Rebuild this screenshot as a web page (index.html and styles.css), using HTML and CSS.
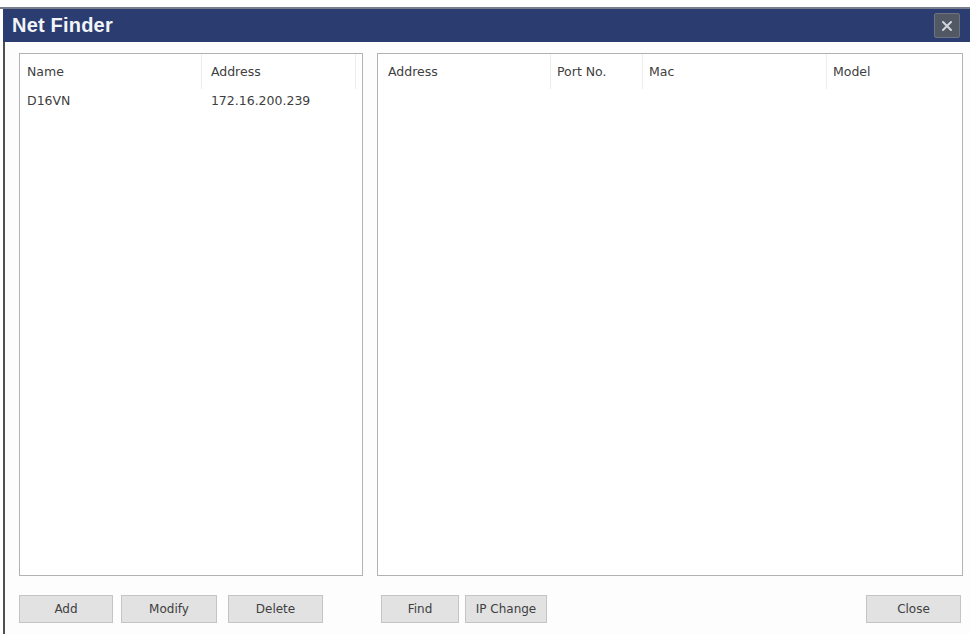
FILE: index.html
```html
<!DOCTYPE html>
<html lang="en">
  <head>
    <meta charset="UTF-8" />
    <meta name="viewport" content="width=device-width, initial-scale=1.0" />
    <title>Net Finder</title>
    <link rel="stylesheet" href="styles.css">
  </head>
  <body>
    <div class="backdrop"></div>
    <main class="window">
      <div class="titlebar">
        <h1 class="titlebar__title">Net Finder</h1>
        <div class="titlebar__close">
          <svg width="14" height="14" viewBox="0 0 14 14">
            <path d="M3 3 L11 11 M11 3 L3 11" stroke="#d3d6dc" stroke-width="2" stroke-linecap="round" />
          </svg>
        </div>
      </div>
      <div class="content">
        <div class="panels">
          <div class="list list_saved">
            <div class="list__head">
              <div class="cell cell_name">Name</div>
              <div class="cell cell_addr">Address</div>
              <div class="cell cell_rest"></div>
            </div>
            <div class="list__row">
              <div class="cell cell_name">D16VN</div>
              <div class="cell cell_addr">172.16.200.239</div>
              <div class="cell"></div>
            </div>
          </div>
          <div class="list list_found">
            <div class="list__head">
              <div class="cell cell_faddr">Address</div>
              <div class="cell cell_sm">Port No.</div>
              <div class="cell cell_sm">Mac</div>
              <div class="cell cell_sm cell_last">Model</div>
            </div>
          </div>
        </div>
        <div class="buttons">
          <div class="buttons__group">
            <button class="btn btn_add">Add</button>
            <button class="btn btn_modify">Modify</button>
            <button class="btn btn_delete">Delete</button>
          </div>
          <div class="buttons__group buttons__group_right">
            <button class="btn btn_find">Find</button>
            <button class="btn btn_ip">IP Change</button>
            <button class="btn btn_close">Close</button>
          </div>
        </div>
      </div>
    </main>
  </body>
</html>
```

FILE: styles.css
```css
:root {
  --navy: rgb(42, 60, 112);
  --border: rgb(178, 178, 178);
  --sep: rgb(236, 236, 236);
  --text: rgb(64, 64, 64);
  --btn-bg: rgb(226, 226, 226);
  --btn-border: rgb(196, 196, 196);
}

* {
  box-sizing: border-box;
  margin: 0;
  padding: 0;
}
body {
  font-family: "DejaVu Sans", Verdana, sans-serif;
  background-color: #fff;
  width: 970px;
  height: 634px;
  overflow: hidden;
}
.backdrop {
  height: 9px;
  background-color: #fff;
  border-bottom: 2px solid rgb(120, 126, 140);
}
.window {
  margin-left: 3px;
  height: 625px;
  border-left: 2px solid rgb(80, 80, 80);
  background-color: #fdfdfd;
}
.titlebar {
  height: 33px;
  margin-left: -2px;
  background-color: var(--navy);
  display: flex;
  align-items: center;
  justify-content: space-between;
  padding: 0 10px 0 9px;
}
.titlebar__title {
  color: #f2f4f8;
  font-family: "Liberation Sans", Arial, sans-serif;
  font-size: 20px;
  font-weight: 700;
  letter-spacing: 0.2px;
}
.titlebar__close {
  width: 26px;
  height: 25px;
  background-color: rgb(82, 88, 100);
  border: 1px solid rgb(108, 114, 126);
  border-radius: 2px;
  display: flex;
  align-items: center;
  justify-content: center;
}

.content {
  padding: 11px 0 0 14px;
}
.panels {
  display: flex;
  gap: 14px;
}
.list {
  height: 523px;
  border: 1px solid var(--border);
  background-color: #fff;
  color: var(--text);
  font-size: 12.5px;
}
.list_saved {
  width: 344px;
}
.list_found {
  width: 586px;
}
.list__head,
.list__row {
  display: flex;
}
.list__head {
  height: 35px;
}
.list__row {
  height: 22px;
}
.cell {
  display: flex;
  align-items: center;
  padding-left: 6px;
  white-space: nowrap;
}
.list__head .cell {
  border-right: 1px solid var(--sep);
}
.list__head .cell_last,
.list__head .cell_rest {
  border-right: none;
}
.list_saved .cell_name {
  width: 183px;
  padding-left: 7px;
}
.list_saved .cell_addr {
  width: 155px;
  padding-left: 9px;
}
.cell_faddr {
  width: 173px;
  padding-left: 10px;
}
.list_found .cell_sm:nth-child(2) {
  width: 92px;
}
.list_found .cell_sm:nth-child(3) {
  width: 184px;
}

.buttons {
  display: flex;
  gap: 14px;
  margin-top: 19px;
}
.buttons__group {
  width: 344px;
  display: flex;
}
.buttons__group_right {
  width: 586px;
  padding: 0 2px 0 4px;
}
.btn {
  height: 28px;
  background-color: var(--btn-bg);
  border: 1px solid var(--btn-border);
  color: var(--text);
  font-family: "DejaVu Sans", Verdana, sans-serif;
  font-size: 12px;
}
.btn_add {
  width: 94px;
}
.btn_modify {
  width: 96px;
  margin-left: 8px;
}
.btn_delete {
  width: 95px;
  margin-left: 11px;
}
.btn_find {
  width: 78px;
}
.btn_ip {
  width: 82px;
  margin-left: 6px;
}
.btn_close {
  width: 95px;
  margin-left: auto;
}
```
